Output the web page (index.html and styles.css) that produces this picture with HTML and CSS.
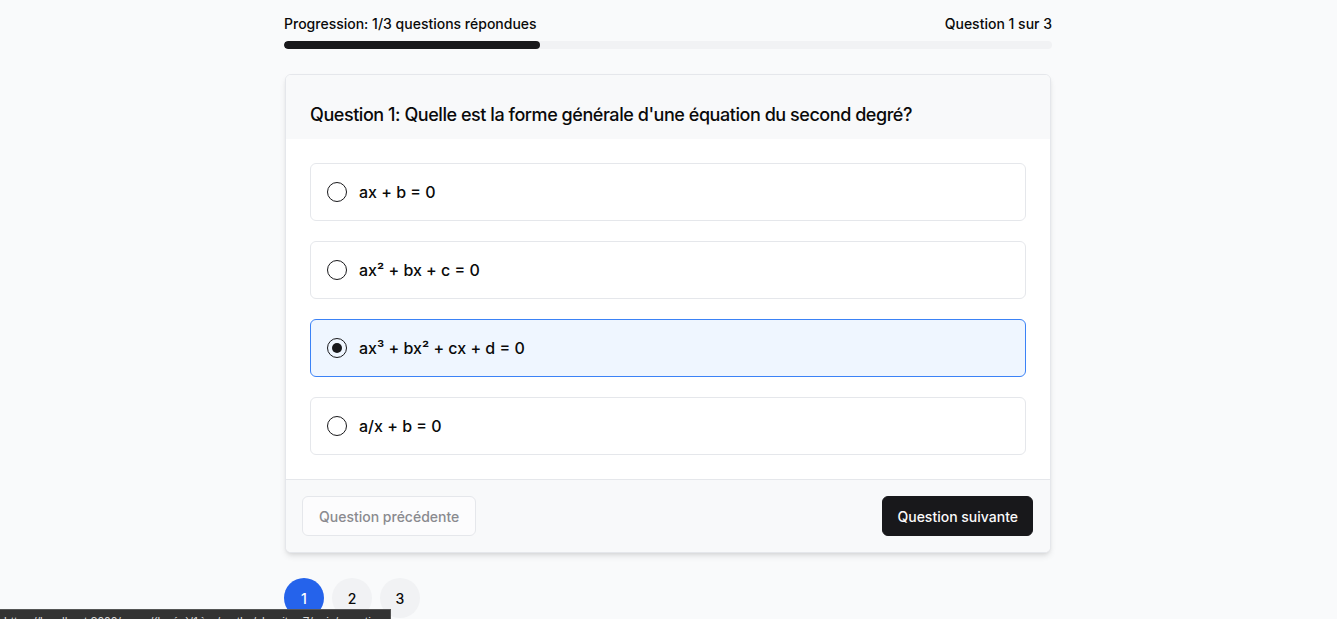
FILE: index.html
```html
<!DOCTYPE html>
<html lang="fr">
<head>
<meta charset="utf-8">
<title>Quiz</title>
<link rel="stylesheet" href="styles.css">
</head>
<body>
<main class="page">
  <div class="quiz">
    <div class="progress-head">
      <span>Progression: 1/3 questions répondues</span>
      <span>Question 1 sur 3</span>
    </div>
    <div class="progress-track"><div class="progress-fill" style="width:33.333%"></div></div>

    <section class="card">
      <header class="card-header">
        <h2 class="card-title">Question 1: Quelle est la forme générale d'une équation du second degré?</h2>
      </header>
      <div class="card-content">
        <label class="option"><span class="radio"></span><span class="option-text">ax + b = 0</span></label>
        <label class="option"><span class="radio"></span><span class="option-text">ax² + bx + c = 0</span></label>
        <label class="option selected"><span class="radio checked"></span><span class="option-text">ax³ + bx² + cx + d = 0</span></label>
        <label class="option"><span class="radio"></span><span class="option-text">a/x + b = 0</span></label>
      </div>
      <footer class="card-footer">
        <button class="btn btn-outline" disabled>Question précédente</button>
        <button class="btn btn-primary">Question suivante</button>
      </footer>
    </section>

    <nav class="pager">
      <span class="page-dot active">1</span>
      <span class="page-dot">2</span>
      <span class="page-dot">3</span>
    </nav>
  </div>
</main>
<div class="status-bar">https://localhost:3000/cours/(lycée)/1ère/maths/chapitre-7/quiz/equations-second-degre</div>
</body>
</html>
```

FILE: styles.css
```css
* { box-sizing: border-box; }
html, body { margin: 0; padding: 0; }
body {
  background: #f9fafb;
  font-family: Inter, "Noto Sans", sans-serif;
  color: #0a0a0a;
  height: 619px;
  overflow: hidden;
}
.page {
  display: flex;
  justify-content: center;
  padding-top: 14px;
  padding-right: 1px;
}
.quiz {
  width: 768px;
}
.progress-head {
  display: flex;
  justify-content: space-between;
  font-size: 14px;
  line-height: 20px;
  font-weight: 500;
  margin-bottom: 7px;
}
.progress-track {
  height: 8px;
  background: #f1f2f4;
  border-radius: 999px;
  overflow: hidden;
}
.progress-fill {
  height: 100%;
  background: #18181b;
  border-radius: 999px;
}
.card {
  margin: 25px 1px 0;
  background: #fff;
  border: 1px solid #e5e7eb;
  border-radius: 6px;
  box-shadow: 0 4px 6px -1px rgba(0,0,0,0.1), 0 2px 4px -2px rgba(0,0,0,0.1);
  overflow: hidden;
}
.card-header {
  background: #f8f9fa;
  padding: 31px 24px 15px;
}
.card-title {
  margin: 0;
  font-size: 18px;
  line-height: 18px;
  font-weight: 500;
  letter-spacing: -0.025em;
}
.card-content {
  padding: 24px;
  display: flex;
  flex-direction: column;
  gap: 20px;
}
.option {
  display: flex;
  align-items: center;
  gap: 12px;
  padding: 16px;
  border: 1px solid #e5e7eb;
  border-radius: 6px;
  font-size: 16px;
  line-height: 24px;
  font-weight: 500;
}
.option.selected {
  background: #eff6ff;
  border-color: #3b82f6;
}
.radio {
  width: 20px;
  height: 20px;
  border: 1.5px solid #18181b;
  border-radius: 50%;
  display: flex;
  align-items: center;
  justify-content: center;
  flex-shrink: 0;
}
.radio.checked::after {
  content: "";
  width: 10px;
  height: 10px;
  border-radius: 50%;
  background: #18181b;
}
.card-footer {
  display: flex;
  justify-content: space-between;
  padding: 16px;
  background: #f8f9fa;
  border-top: 1px solid #e5e7eb;
}
.btn {
  font-family: inherit;
  font-size: 14px;
  line-height: 20px;
  font-weight: 500;
  height: 40px;
  padding: 1px 14px 0;
  border-radius: 6px;
}
.btn-outline {
  background: #fcfcfd;
  border: 1px solid #e5e7eb;
  color: #8a8a8f;
  padding: 1px 16px 0;
}
.btn-primary {
  background: #18181b;
  border: 1px solid #18181b;
  color: #fafafa;
  margin-right: 1px;
}
.pager {
  display: flex;
  gap: 8px;
  margin-top: 25px;
}
.page-dot {
  width: 40px;
  height: 40px;
  border-radius: 50%;
  background: #f1f2f4;
  display: flex;
  align-items: center;
  justify-content: center;
  font-size: 14px;
  font-weight: 500;
}
.page-dot.active {
  background: #2563eb;
  color: #fff;
}
.status-bar {
  position: fixed;
  left: 0;
  bottom: -12px;
  width: 391px;
  height: 22px;
  background: #333;
  border: 1px solid #555;
  border-left: none;
  color: #dcdcdc;
  font-family: "Liberation Sans", sans-serif;
  font-size: 12px;
  line-height: 18px;
  padding: 3px 4px 0;
  white-space: nowrap;
  overflow: hidden;
}
```
